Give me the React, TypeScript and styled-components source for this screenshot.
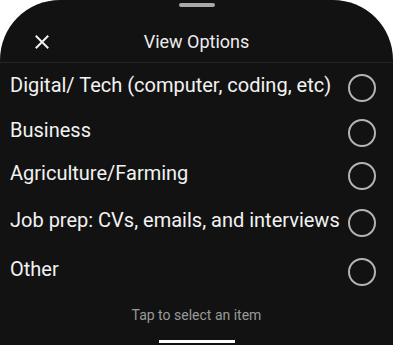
import styled, { createGlobalStyle } from "styled-components";

const options = [
  { label: "Digital/ Tech (computer, coding, etc)", height: 46 },
  { label: "Business", height: 44 },
  { label: "Agriculture/Farming", height: 43 },
  { label: "Job prep: CVs, emails, and interviews", height: 50 },
  { label: "Other", height: 49 },
];

export default function App() {
  return (
    <>
      <GlobalStyle />
      <Sheet>
        <Handle />
        <Header>
          <CloseButton aria-label="Close">
            <svg width="14" height="14" viewBox="0 0 14 14">
              <path
                d="M1.5 1.5 L12.5 12.5 M12.5 1.5 L1.5 12.5"
                stroke="#f2f2f2"
                strokeWidth="2"
                strokeLinecap="square"
              />
            </svg>
          </CloseButton>
          <Title>View Options</Title>
        </Header>

        <List>
          {options.map((item) => (
            <Row key={item.label} $height={item.height}>
              <Label>{item.label}</Label>
              <Radio />
            </Row>
          ))}
        </List>

        <Hint>Tap to select an item</Hint>
        <HomeBar />
      </Sheet>
    </>
  );
}

const GlobalStyle = createGlobalStyle`
  * {
    box-sizing: border-box;
  }

  html,
  body {
    margin: 0;
    padding: 0;
    background: #ffffff;
    font-family: Roboto, "Liberation Sans", sans-serif;
  }
`;

const Sheet = styled.div`
  height: 100vh;
  width: 100%;

  display: flex;
  flex-direction: column;

  overflow: hidden;

  background-color: #121212;
  border-radius: 60px 60px 0 0;
`;

const Handle = styled.div`
  width: 36px;
  height: 4px;

  margin: 3px auto 0;

  border-radius: 2px;
  background-color: #a9a9a9;
`;

const Header = styled.div`
  height: 56px;

  display: grid;
  grid-template-columns: 80px 1fr 80px;
  align-items: center;

  padding-top: 14px;

  border-bottom: 1px solid #252525;
`;

const CloseButton = styled.button`
  width: 14px;
  height: 14px;

  margin-left: 35px;

  padding: 0;

  display: flex;

  border: none;
  background: none;
`;

const Title = styled.p`
  margin: 0;

  text-align: center;
  font-size: 18px;
  color: #ececec;
`;

const List = styled.div`
  display: flex;
  flex-direction: column;
`;

const Row = styled.div<{ $height: number }>`
  height: ${(p) => p.$height}px;

  padding: 0 17px 0 10px;

  display: flex;
  align-items: center;
  justify-content: space-between;
`;

const Label = styled.span`
  margin-bottom: 3px;

  font-size: 20px;
  color: #f2f2f2;
  white-space: nowrap;
`;

const Radio = styled.span`
  flex-shrink: 0;

  width: 28px;
  height: 28px;

  margin-top: 3px;

  border: 2px solid #b4b4b4;
  border-radius: 50%;
`;

const Hint = styled.p`
  margin: 12px 0 0;

  text-align: center;
  font-size: 14px;
  line-height: 16px;
  color: #9a9a9a;
`;

const HomeBar = styled.div`
  width: 76px;
  height: 3px;

  margin: 17px auto 0;

  background-color: #ffffff;
`;
